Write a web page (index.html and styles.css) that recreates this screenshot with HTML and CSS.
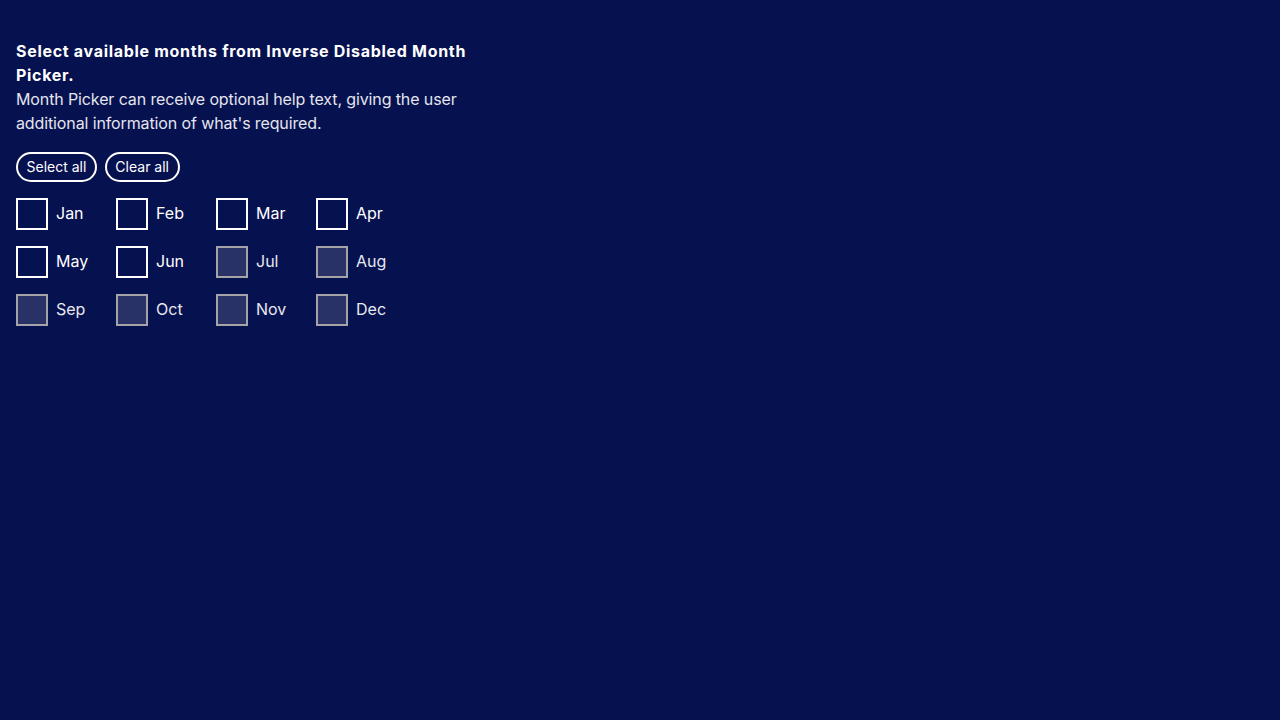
FILE: index.html
```html
<!DOCTYPE html>
<html lang="en">
<head>
<meta charset="utf-8">
<title>Month Picker</title>
<link rel="stylesheet" href="styles.css">
</head>
<body>
<main class="page">
  <fieldset class="picker">
    <legend class="legend">
      <span class="title">Select available months from Inverse Disabled Month Picker.</span>
      <span class="help">Month Picker can receive optional help text, giving the user additional information of what's required.</span>
    </legend>
    <div class="actions">
      <button class="pill" type="button">Select all</button>
      <button class="pill" type="button">Clear all</button>
    </div>
    <div class="grid">
      <label class="month"><span class="box"></span><span class="name">Jan</span></label>
      <label class="month"><span class="box"></span><span class="name">Feb</span></label>
      <label class="month"><span class="box"></span><span class="name">Mar</span></label>
      <label class="month"><span class="box"></span><span class="name">Apr</span></label>
      <label class="month"><span class="box"></span><span class="name">May</span></label>
      <label class="month"><span class="box"></span><span class="name">Jun</span></label>
      <label class="month disabled"><span class="box"></span><span class="name">Jul</span></label>
      <label class="month disabled"><span class="box"></span><span class="name">Aug</span></label>
      <label class="month disabled"><span class="box"></span><span class="name">Sep</span></label>
      <label class="month disabled"><span class="box"></span><span class="name">Oct</span></label>
      <label class="month disabled"><span class="box"></span><span class="name">Nov</span></label>
      <label class="month disabled"><span class="box"></span><span class="name">Dec</span></label>
    </div>
  </fieldset>
</main>
</body>
</html>
```
FILE: styles.css
```css
html, body {
  margin: 0;
  padding: 0;
  background: #06114f;
  color: #ffffff;
  font-family: "Inter", "Liberation Sans", sans-serif;
}

.page {
  padding: 39px 16px 16px;
}

.picker {
  border: 0;
  margin: 0;
  padding: 0;
  min-width: 0;
}

.legend {
  padding: 0;
  width: 472px;
  display: block;
}

.title {
  display: block;
  font-size: 16px;
  font-weight: 700;
  line-height: 24px;
  letter-spacing: 0.7px;
  color: #ffffff;
}

.help {
  display: block;
  font-size: 16px;
  line-height: 24px;
  letter-spacing: -0.12px;
  color: #e4e5ee;
}

.actions {
  display: flex;
  gap: 8px;
  margin-top: 17px;
}

.pill {
  font-family: inherit;
  font-size: 14px;
  color: #ffffff;
  background: transparent;
  border: 2px solid #ffffff;
  border-radius: 15px;
  height: 30px;
  padding: 0 8.5px;
  line-height: 26px;
  cursor: pointer;
}

.grid {
  display: grid;
  grid-template-columns: repeat(4, 100px);
  row-gap: 16px;
  margin-top: 16px;
}

.month {
  display: flex;
  align-items: center;
  gap: 8px;
  height: 32px;
  font-size: 16px;
  line-height: 22px;
  color: #ffffff;
}

.name {
  padding-bottom: 2px;
}

.box {
  box-sizing: border-box;
  width: 32px;
  height: 32px;
  border: 2px solid #ffffff;
  background: #06114f;
}

.month.disabled .box {
  border-color: #a3a3a8;
  background: #293266;
}

.month.disabled .name {
  color: #e8e8ee;
}
```
